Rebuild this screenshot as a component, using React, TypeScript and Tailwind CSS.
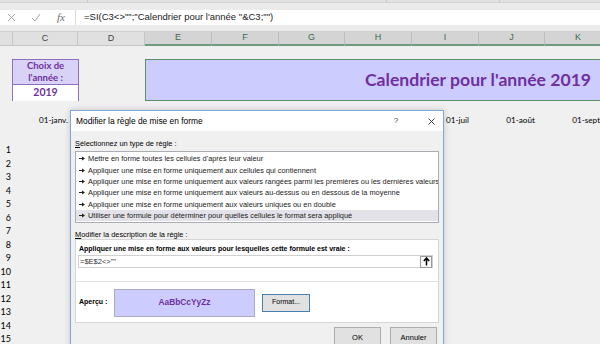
import React from "react";

const columns = [
  { letter: "", width: "w-[13px]", sel: false },
  { letter: "C", width: "w-[65px]", sel: false },
  { letter: "D", width: "w-[67px]", sel: false },
  { letter: "E", width: "w-[67px]", sel: true },
  { letter: "F", width: "w-[67px]", sel: true },
  { letter: "G", width: "w-[66px]", sel: true },
  { letter: "H", width: "w-[67px]", sel: true },
  { letter: "I", width: "w-[67px]", sel: true },
  { letter: "J", width: "w-[66px]", sel: true },
  { letter: "K", width: "w-[67px]", sel: true },
];

// D..H sit under the dialog, so they are left blank
const months = ["01-janv.", "", "", "", "", "", "01-juil", "01-août", "01-sept."];

const rules = [
  "Mettre en forme toutes les cellules d'après leur valeur",
  "Appliquer une mise en forme uniquement aux cellules qui contiennent",
  "Appliquer une mise en forme uniquement aux valeurs rangées parmi les premières ou les dernières valeurs",
  "Appliquer une mise en forme uniquement aux valeurs au-dessus ou en dessous de la moyenne",
  "Appliquer une mise en forme uniquement aux valeurs uniques ou en double",
  "Utiliser une formule pour déterminer pour quelles cellules le format sera appliqué",
];

function RuleArrow() {
  return (
    <svg width="6" height="5" viewBox="0 0 6 5" className="shrink-0">
      <line x1="0" y1="2.5" x2="3.5" y2="2.5" stroke="#222" strokeWidth="1" />
      <path d="M3 0.5 L6 2.5 L3 4.5 Z" fill="#222" />
    </svg>
  );
}

export default function App() {
  return (
    <div className="relative w-[600px] h-[344px] overflow-hidden bg-[#f0f0f0] font-['Liberation_Sans',Arial,sans-serif] text-black">
      {/* ribbon bottom */}
      <div className="h-[3px] bg-[#e2e2e2] border-b border-[#d3d3d3] flex">
        <div className="w-[88px] border-r border-[#c9c9c9]" />
        <div className="w-[299px] border-r border-[#c9c9c9]" />
        <div className="w-[113px] border-r border-[#c9c9c9]" />
      </div>

      {/* formula bar */}
      <div className="bg-[#ebebeb] pt-[7px] pb-[6px]">
        <div className="h-[15px] bg-white flex items-center">
          <div className="w-[75px] flex items-center h-full">
            <svg width="9" height="9" viewBox="0 0 9 9" className="ml-[7px]">
              <path d="M1 1 L8 8 M8 1 L1 8" stroke="#a6a6a6" strokeWidth="1" />
            </svg>
            <svg width="10" height="9" viewBox="0 0 10 9" className="ml-[15px]">
              <path d="M1 5 L4 8 L9 1" stroke="#a6a6a6" strokeWidth="1" fill="none" />
            </svg>
            <span className="ml-[16px] font-['Liberation_Serif',serif] italic text-[11px] text-[#707070] leading-none">fx</span>
          </div>
          <div className="h-full border-l border-[#dadada] pl-[8px] flex items-center text-[9.5px] text-[#222] whitespace-nowrap">
            =SI(C3&lt;&gt;"";"Calendrier pour l'année "&amp;C3;"")
          </div>
        </div>
      </div>

      {/* column headers */}
      <div className="flex h-[15px] border-t border-[#cfcfcf]">
        {columns.map((c, i) => (
          <div
            key={i}
            className={`${c.width} shrink-0 flex items-center justify-center text-[9px] border-r ${
              c.sel
                ? "bg-[#d4d4d4] text-[#3d6a50] border-[#bdbdbd] border-b-2 border-b-[#6f9b80]"
                : "bg-[#e0e0e0] text-[#444] border-[#c6c6c6] border-b border-b-[#c6c6c6]"
            }`}
          >
            {c.letter}
          </div>
        ))}
      </div>

      {/* sheet body */}
      <div className="font-['Lato',sans-serif]">
        <div className="h-[13px]" />

        {/* title row */}
        <div className="flex h-[42px]">
          <div className="w-[12px] shrink-0" />
          <div className="w-[67px] shrink-0 border border-[#8f70c0] flex flex-col text-[#7030a0] font-bold">
            <div className="h-[26px] bg-[#d8d2f6] border-b border-[#8f70c0] flex flex-col items-center justify-center text-[9.5px] leading-[12px]">
              <span>Choix de</span>
              <span>l'année :</span>
            </div>
            <div className="flex-1 bg-white flex items-center justify-center text-[10.5px]">2019</div>
          </div>
          <div className="w-[66px] shrink-0" />
          <div className="w-[666px] shrink-0 bg-[#ccccff] border border-[#5b8f6f] flex items-center justify-center">
            <span className="text-[#7030a0] font-bold text-[17.6px]">Calendrier pour l'année 2019</span>
          </div>
        </div>

        <div className="h-[12px]" />

        {/* months row */}
        <div className="flex h-[14px] items-center">
          <div className="w-[13px] shrink-0" />
          {months.map((m, i) => (
            <div key={i} className={`${columns[i + 1].width} shrink-0 text-right pr-[10px] text-[8.2px] whitespace-nowrap`}>
              {m}
            </div>
          ))}
        </div>

        <div className="h-[16px]" />

        {/* day numbers */}
        <div className="flex flex-col">
          {Array.from({ length: 15 }, (_, i) => (
            <div key={i} className="h-[13.5px] w-[11px] flex items-center justify-end text-[9px]">
              {i + 1}
            </div>
          ))}
        </div>
      </div>

      {/* dialog */}
      <div className="absolute left-[70px] top-[110px] w-[374px] h-[250px] border border-[#7fa7d6] bg-[#f0f0f0] shadow-[0_0_6px_rgba(0,0,0,0.18)]">
        <div className="h-[20px] bg-white flex items-center justify-between pl-[5px] text-[8.4px]">
          <span>Modifier la règle de mise en forme</span>
          <div className="flex items-center">
            <span className="w-[24px] text-center text-[8px] text-[#444] mr-[11px]">?</span>
            <span className="w-[24px] flex justify-center">
              <svg width="7" height="7" viewBox="0 0 7 7">
                <path d="M0.5 0.5 L6.5 6.5 M6.5 0.5 L0.5 6.5" stroke="#333" strokeWidth="0.9" />
              </svg>
            </span>
          </div>
        </div>

        <div className="px-[4px] text-[7.4px]">
          <div className="h-[20px] pt-[8px] leading-[9px]">
            <span className="underline">S</span>électionnez un type de règle :
          </div>

          <div className="h-[72px] border border-[#abadb3] bg-white pt-[1px] overflow-hidden">
            {rules.map((r, i) => (
              <div
                key={i}
                className={`h-[11.4px] flex items-center gap-[3px] pl-[3px] whitespace-nowrap ${i === 5 ? "bg-[#e2e2e8]" : ""}`}
              >
                <RuleArrow />
                <span className="text-[#222]">{r}</span>
              </div>
            ))}
          </div>

          <div className="h-[16px] pt-[7px] leading-[9px]">
            <span className="underline">M</span>odifier la description de la règle :
          </div>

          <div className="h-[84px] border border-[#d6d6d6] bg-white flex flex-col">
            <div className="pt-[4px] pl-[3px] leading-[9px] font-bold text-[7px] whitespace-nowrap">
              Appliquer une mise en forme aux valeurs pour lesquelles cette formule est vraie :
            </div>
            <div className="mt-[2px] ml-[2px] mr-[5px] h-[13px] border border-[#d0d0d0] flex items-center justify-between">
              <span className="pl-[1px] text-[7.5px] text-[#333]">=$E$2&lt;&gt;""</span>
              <span className="w-[12px] h-[12px] border border-[#9a9a9a] bg-[#fafafa] flex items-center justify-center">
                <svg width="7" height="9" viewBox="0 0 7 9">
                  <path d="M3.5 8.5 V1.5 M0.8 4 L3.5 1 L6.2 4" stroke="#000" strokeWidth="1.5" fill="none" />
                </svg>
              </span>
            </div>
            <div className="mt-[13px] border-t border-[#e3e3e3] flex-1 flex items-center pl-[3px] pt-[1px]">
              <span className="w-[35px] font-bold text-[7px]">Aperçu :</span>
              <div className="w-[141px] h-[28px] bg-[#ccccff] border border-[#aaaacc] flex items-center justify-center text-[#7030a0] font-bold text-[8.4px]">
                AaBbCcYyZz
              </div>
              <div className="ml-[7px] w-[48px] h-[18px] bg-[#e1e1e1] border border-[#4a7fb0] flex items-center justify-center text-[7px]">
                Format...
              </div>
            </div>
          </div>

          <div className="mt-[4px] flex justify-end pr-[2px]">
            <div className="w-[47px] h-[22px] bg-[#e1e1e1] border border-[#adadad] flex items-center justify-center text-[7.5px] mr-[9px]">
              OK
            </div>
            <div className="w-[47px] h-[22px] bg-[#e1e1e1] border border-[#adadad] flex items-center justify-center text-[7.5px]">
              Annuler
            </div>
          </div>
        </div>
      </div>
    </div>
  );
}
